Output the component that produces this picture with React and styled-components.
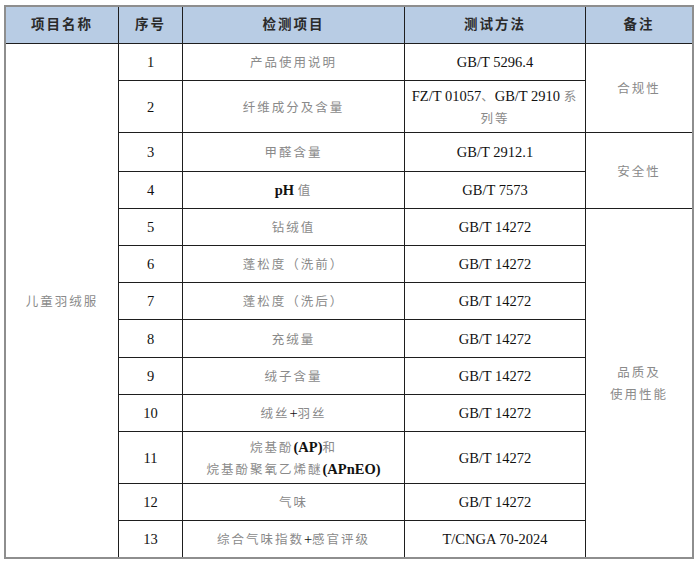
import React from "react";
import styled, { createGlobalStyle } from "styled-components";

const Global = createGlobalStyle`
  html, body { margin: 0; padding: 0; background: #ffffff; }
  body { width: 700px; height: 564px; overflow: hidden; }
`;

const Page = styled.div`
  padding: 5px 6px 0 4px;
`;

const Grid = styled.div`
  display: grid;
  width: 690px;
  box-sizing: border-box;
  grid-template-columns: 112px 63px 221px 180px 106px;
  grid-template-rows: 36px 36px 51px 38px 36px 36px 36px 36px 37px 36px 36px 51px 36px 36px;
  gap: 1px;
  background: #1e1e1e;
  border: 2px solid #8e8e8e;
`;

const Cell = styled.div`
  background: ${(p) => (p.$head ? "#b8cce4" : "#ffffff")};
  display: flex;
  flex-direction: column;
  align-items: center;
  justify-content: center;
  text-align: center;
  grid-row: ${(p) => p.$row || "auto"};
  grid-column: ${(p) => p.$col || "auto"};
  line-height: 22px;
  padding: 0 4px;
`;

const HeadText = styled.span`
  font-family: "Liberation Serif", "Noto Sans CJK SC", serif;
  font-weight: 700;
  font-size: 13.5px;
  letter-spacing: 2px;
  color: #2a2a2a;
`;

const Cjk = styled.span`
  font-family: "Noto Sans CJK SC", sans-serif;
  font-size: 12.5px;
  letter-spacing: ${(p) => (p.$tight ? "1px" : "2px")};
  color: #8a8a8a;
`;

const Latin = styled.span`
  font-family: "Liberation Serif", serif;
  font-size: 14.5px;
  color: #111;
  font-weight: ${(p) => (p.$bold ? 700 : 400)};
  letter-spacing: 0;
`;

const Line = styled.div`
  white-space: nowrap;
`;

const rows = [
  { n: "1", item: [<Cjk key="a">产品使用说明</Cjk>], method: [<Latin key="a">GB/T 5296.4</Latin>] },
  {
    n: "2",
    item: [<Cjk key="a">纤维成分及含量</Cjk>],
    method: [
      <Line key="l1">
        <Latin>FZ/T 01057</Latin>
        <Cjk $tight>、</Cjk>
        <Latin>GB/T 2910 </Latin>
        <Cjk>系</Cjk>
      </Line>,
      <Line key="l2">
        <Cjk>列等</Cjk>
      </Line>,
    ],
  },
  { n: "3", item: [<Cjk key="a">甲醛含量</Cjk>], method: [<Latin key="a">GB/T 2912.1</Latin>] },
  {
    n: "4",
    item: [
      <Line key="a">
        <Latin $bold>pH </Latin>
        <Cjk>值</Cjk>
      </Line>,
    ],
    method: [<Latin key="a">GB/T 7573</Latin>],
  },
  { n: "5", item: [<Cjk key="a">钻绒值</Cjk>], method: [<Latin key="a">GB/T 14272</Latin>] },
  { n: "6", item: [<Cjk key="a">蓬松度（洗前）</Cjk>], method: [<Latin key="a">GB/T 14272</Latin>] },
  { n: "7", item: [<Cjk key="a">蓬松度（洗后）</Cjk>], method: [<Latin key="a">GB/T 14272</Latin>] },
  { n: "8", item: [<Cjk key="a">充绒量</Cjk>], method: [<Latin key="a">GB/T 14272</Latin>] },
  { n: "9", item: [<Cjk key="a">绒子含量</Cjk>], method: [<Latin key="a">GB/T 14272</Latin>] },
  {
    n: "10",
    item: [
      <Line key="a">
        <Cjk>绒丝</Cjk>
        <Latin>+</Latin>
        <Cjk>羽丝</Cjk>
      </Line>,
    ],
    method: [<Latin key="a">GB/T 14272</Latin>],
  },
  {
    n: "11",
    item: [
      <Line key="l1">
        <Cjk>烷基酚</Cjk>
        <Latin $bold>(AP)</Latin>
        <Cjk>和</Cjk>
      </Line>,
      <Line key="l2">
        <Cjk>烷基酚聚氧乙烯醚</Cjk>
        <Latin $bold>(APnEO)</Latin>
      </Line>,
    ],
    method: [<Latin key="a">GB/T 14272</Latin>],
  },
  { n: "12", item: [<Cjk key="a">气味</Cjk>], method: [<Latin key="a">GB/T 14272</Latin>] },
  {
    n: "13",
    item: [
      <Line key="a">
        <Cjk>综合气味指数</Cjk>
        <Latin>+</Latin>
        <Cjk>感官评级</Cjk>
      </Line>,
    ],
    method: [<Latin key="a">T/CNGA 70-2024</Latin>],
  },
];

const notes = [
  { row: "2 / 4", lines: ["合规性"] },
  { row: "4 / 6", lines: ["安全性"] },
  { row: "6 / 15", lines: ["品质及", "使用性能"] },
];

export default function App() {
  return (
    <>
      <Global />
      <Page>
        <Grid>
          {["项目名称", "序号", "检测项目", "测试方法", "备注"].map((h, i) => (
            <Cell key={h} $head $row="1" $col={`${i + 1}`}>
              <HeadText>{h}</HeadText>
            </Cell>
          ))}
          <Cell $row="2 / 15" $col="1">
            <Cjk>儿童羽绒服</Cjk>
          </Cell>
          {rows.map((r, i) => (
            <React.Fragment key={r.n}>
              <Cell $row={`${i + 2}`} $col="2">
                <Latin>{r.n}</Latin>
              </Cell>
              <Cell $row={`${i + 2}`} $col="3">
                {r.item}
              </Cell>
              <Cell $row={`${i + 2}`} $col="4">
                {r.method}
              </Cell>
            </React.Fragment>
          ))}
          {notes.map((n) => (
            <Cell key={n.row} $row={n.row} $col="5">
              {n.lines.map((l) => (
                <Line key={l}>
                  <Cjk>{l}</Cjk>
                </Line>
              ))}
            </Cell>
          ))}
        </Grid>
      </Page>
    </>
  );
}
